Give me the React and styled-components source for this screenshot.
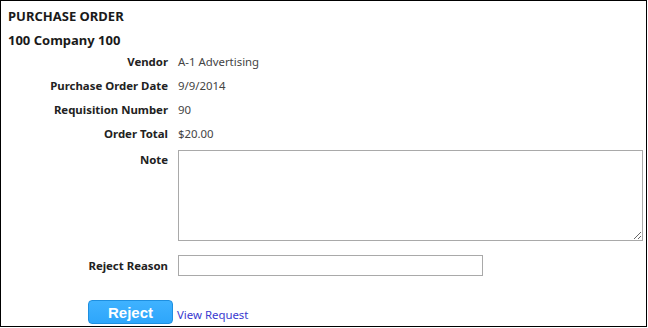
import React from 'react';
import styled, { createGlobalStyle } from 'styled-components';

const GlobalStyle = createGlobalStyle`
  html, body {
    margin: 0;
    padding: 0;
    background: #fff;
  }
  body {
    font-family: "Noto Sans", "Open Sans", sans-serif;
    color: #222;
  }
`;

const Frame = styled.div`
  width: 647px;
  height: 327px;
  box-sizing: border-box;
  border: 1px solid #000;
  padding: 6px 0 0 7px;
  overflow: hidden;
`;

const Title = styled.h1`
  margin: 0;
  font-size: 13px;
  font-weight: 700;
  line-height: 18px;
  color: #1a1a1a;
`;

const Company = styled.h2`
  margin: 6px 0 0;
  font-size: 13px;
  font-weight: 700;
  line-height: 18px;
  color: #1a1a1a;
`;

const Form = styled.div`
  display: grid;
  grid-template-columns: 160px 1fr;
  column-gap: 10px;
  margin-top: 5px;
`;

const Label = styled.div`
  text-align: right;
  font-size: 11.4px;
  font-weight: 700;
  line-height: 16px;
  color: #222;
  padding-top: ${p => p.$top || 0}px;
  margin-bottom: ${p => p.$gap ?? 8}px;
`;

const Value = styled.div`
  font-size: 11.4px;
  line-height: 16px;
  color: #444;
  margin-bottom: ${p => p.$gap ?? 8}px;
`;

const Note = styled.textarea`
  display: block;
  width: 465px;
  height: 91px;
  box-sizing: border-box;
  border: 1px solid #a9a9a9;
  margin: 0 0 14px;
  resize: both;
  font-family: inherit;
`;

const Reason = styled.input`
  display: block;
  width: 305px;
  height: 21px;
  box-sizing: border-box;
  border: 1px solid #a9a9a9;
  margin: 0;
  font-family: inherit;
`;

const Actions = styled.div`
  display: flex;
  align-items: flex-end;
  gap: 4px;
  margin: 24px 0 0 80px;
`;

const Button = styled.button`
  width: 85px;
  height: 24px;
  box-sizing: border-box;
  border: 1px solid #1e8fe0;
  border-radius: 4px;
  background: linear-gradient(#3fb2ff, #2ea6fb);
  color: #fff;
  font-family: "Liberation Sans", Arial, sans-serif;
  font-weight: 700;
  font-size: 15px;
  padding: 0;
  cursor: pointer;
`;

const Link = styled.a`
  font-size: 11.4px;
  line-height: 16px;
  color: #3a3ad0;
  text-decoration: none;
  padding-bottom: 1px;
`;

export default function App() {
  return (
    <>
      <GlobalStyle />
      <Frame>
        <Title>PURCHASE ORDER</Title>
        <Company>100 Company 100</Company>
        <Form>
          <Label>Vendor</Label>
          <Value>A-1 Advertising</Value>
          <Label>Purchase Order Date</Label>
          <Value>9/9/2014</Value>
          <Label>Requisition Number</Label>
          <Value>90</Value>
          <Label>Order Total</Label>
          <Value>$20.00</Value>
          <Label $top={2}>Note</Label>
          <div><Note /></div>
          <Label $top={3} $gap={0}>Reject Reason</Label>
          <div><Reason /></div>
        </Form>
        <Actions>
          <Button>Reject</Button>
          <Link href="#">View Request</Link>
        </Actions>
      </Frame>
    </>
  );
}
